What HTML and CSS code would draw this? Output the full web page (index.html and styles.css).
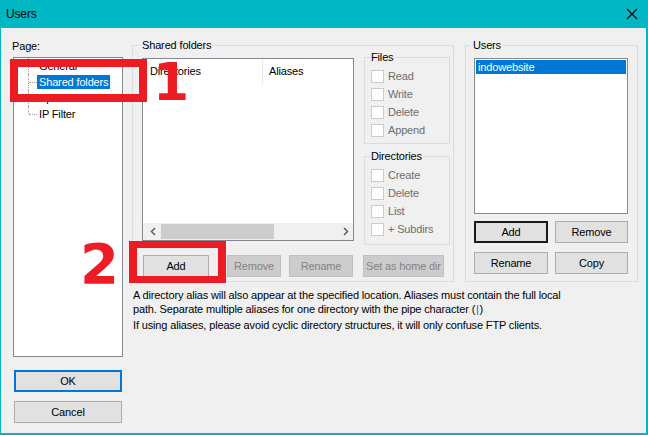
FILE: index.html
```html
<!DOCTYPE html>
<html lang="en">
<head>
    <meta charset="UTF-8">
    <meta name="viewport" content="width=device-width, initial-scale=1.0">
    <title>Users</title>
    <link rel="stylesheet" href="styles.css">
</head>
<body>
    <div class="window">
        <div class="titlebar">
            <span class="title">Users</span>
            <svg class="close" width="12" height="12" viewBox="0 0 12 12">
                <path d="M1 1L11 11M11 1L1 11" stroke="#000" stroke-width="1.1" fill="none"/>
            </svg>
        </div>

        <div class="body">
            <div class="pages">
                <div class="label">Page:</div>
                <div class="tree">
                    <div class="tree-item"><span class="branch"></span><span class="node">General</span></div>
                    <div class="tree-item"><span class="branch"></span><span class="node selected">Shared folders</span></div>
                    <div class="tree-item"><span class="branch"></span><span class="node">Speed Limits</span></div>
                    <div class="tree-item last"><span class="branch"></span><span class="node">IP Filter</span></div>
                </div>
                <div class="dialog-buttons">
                    <button class="btn btn-ok">OK</button>
                    <button class="btn">Cancel</button>
                </div>
            </div>

            <div class="main">
                <div class="groups">
                    <div class="group shared">
                        <div class="group-title">Shared folders</div>
                        <div class="shared-top">
                            <div class="dir-list">
                                <div class="list-header">
                                    <div class="col col-dir">Directories</div>
                                    <div class="col col-alias">Aliases</div>
                                </div>
                                <div class="list-body"></div>
                                <div class="hscroll">
                                    <svg class="arrow" width="6" height="9" viewBox="0 0 6 9"><path d="M5 1L1.5 4.5L5 8" stroke="#606060" stroke-width="1.5" fill="none"/></svg>
                                    <div class="track"><div class="thumb"></div></div>
                                    <svg class="arrow" width="6" height="9" viewBox="0 0 6 9"><path d="M1 1L4.5 4.5L1 8" stroke="#606060" stroke-width="1.5" fill="none"/></svg>
                                </div>
                            </div>
                            <div class="perms">
                                <div class="group sub files">
                                    <div class="group-title">Files</div>
                                    <label class="check"><span class="box"></span>Read</label>
                                    <label class="check"><span class="box"></span>Write</label>
                                    <label class="check"><span class="box"></span>Delete</label>
                                    <label class="check"><span class="box"></span>Append</label>
                                </div>
                                <div class="group sub dirs">
                                    <div class="group-title">Directories</div>
                                    <label class="check"><span class="box"></span>Create</label>
                                    <label class="check"><span class="box"></span>Delete</label>
                                    <label class="check"><span class="box"></span>List</label>
                                    <label class="check"><span class="box"></span>+ Subdirs</label>
                                </div>
                            </div>
                        </div>
                        <div class="shared-buttons">
                            <button class="btn b-add">Add</button>
                            <button class="btn b-remove" disabled>Remove</button>
                            <button class="btn b-rename" disabled>Rename</button>
                            <button class="btn b-home" disabled>Set as home dir</button>
                        </div>
                    </div>

                    <div class="group users">
                        <div class="group-title">Users</div>
                        <div class="user-list">
                            <div class="user selected">indowebsite</div>
                        </div>
                        <div class="user-buttons">
                            <button class="btn btn-default">Add</button>
                            <button class="btn">Remove</button>
                            <button class="btn">Rename</button>
                            <button class="btn">Copy</button>
                        </div>
                    </div>
                </div>

                <p class="note">A directory alias will also appear at the specified location. Aliases must contain the full local<br>path. Separate multiple aliases for one directory with the pipe character (&#8202;<span class="pipe">|</span>&#8202;)</p>
                <p class="note second">If using aliases, please avoid cyclic directory structures, it will only confuse FTP clients.</p>
            </div>
        </div>

        <!-- annotations drawn over the dialog -->
        <div class="mark box-1"></div>
        <div class="mark digit digit-1">1</div>
        <div class="mark box-2"></div>
        <div class="mark digit digit-2">2</div>
    </div>
</body>
</html>
```

FILE: styles.css
```css
* {
    box-sizing: border-box;
}

body {
    margin: 0;
    padding: 0;
    font-family: "Liberation Sans", Arial, sans-serif;
    font-size: 11px;
    letter-spacing: -0.15px;
    color: #000;
    background-color: #f0f0f0;
}

.window {
    position: relative;
    width: 648px;
    height: 435px;
    background-color: #f0f0f0;
    border-left: 1px solid #00b7c3;
    border-right: 2px solid #00b7c3;
    border-bottom: 2px solid #00b7c3;
    overflow: hidden;
}

.titlebar {
    height: 28px;
    margin-left: -1px;
    margin-right: -2px;
    background-color: #00b7c3;
    display: flex;
    align-items: center;
    justify-content: space-between;
    padding: 0 10px 0 6px;
}

.title {
    font-size: 12px;
}

.close {
    display: block;
}

.body {
    display: flex;
    padding: 11px 0 0 11px;
}

/* left column */
.pages {
    width: 111px;
    display: flex;
    flex-direction: column;
}

.label {
    height: 14px;
    line-height: 14px;
    margin-bottom: 4px;
}

.tree {
    margin-left: 1px;
    width: 110px;
    height: 300px;
    background-color: #fff;
    border: 1px solid #828790;
}

.tree-item {
    height: 16px;
    display: flex;
    align-items: center;
    padding-left: 14px;
}

.branch {
    width: 9px;
    height: 16px;
    border-left: 1px dotted #a0a0a0;
    position: relative;
}

.branch::after {
    content: "";
    position: absolute;
    left: 0;
    top: 8px;
    width: 8px;
    border-top: 1px dotted #a0a0a0;
}

.tree-item.last .branch {
    height: 8px;
    align-self: flex-start;
}

.node {
    line-height: 14px;
    padding: 0 2px;
}

.node.selected {
    background-color: #0078d7;
    color: #fff;
}

.dialog-buttons {
    margin-top: 13px;
    margin-left: 2px;
    display: flex;
    flex-direction: column;
    gap: 9px;
}

.btn {
    font-family: inherit;
    font-size: 11px;
    letter-spacing: -0.15px;
    white-space: nowrap;
    color: #000;
    background-color: #e1e1e1;
    border: 1px solid #adadad;
    border-radius: 0;
    padding: 0;
    height: 22px;
    margin: 0;
}

.btn:disabled {
    background-color: #cccccc;
    border-color: #bfbfbf;
    color: #838383;
}

.dialog-buttons .btn {
    width: 108px;
}

.btn-ok {
    border: 2px solid #0078d7;
}

.btn-default {
    border: 2px solid #1a1a1a;
}

/* main column */
.main {
    margin-left: 9px;
    margin-top: 6px;
}

.groups {
    display: flex;
    gap: 11px;
}

.group {
    border: 1px solid #dcdcdc;
}

.group-title {
    width: fit-content;
    height: 14px;
    line-height: 14px;
    margin-top: -8px;
    padding: 0 2px;
    background-color: #f0f0f0;
}

.shared {
    width: 322px;
    height: 237px;
    padding: 0 0 0 9px;
}

.shared > .group-title {
    margin-left: -2px;
}

.shared-top {
    display: flex;
    margin-top: 6px;
}

.dir-list {
    width: 212px;
    height: 183px;
    background-color: #fff;
    border: 1px solid #828790;
    display: flex;
    flex-direction: column;
}

.list-header {
    display: flex;
    height: 25px;
    padding-top: 1px;
}

.col {
    line-height: 23px;
}

.col-dir {
    width: 120px;
    padding-left: 7px;
    border-right: 1px solid #e5e5e5;
}

.col-alias {
    padding-left: 6px;
}

.list-body {
    flex: 1;
}

.hscroll {
    height: 17px;
    background-color: #f0f0f0;
    display: flex;
    align-items: center;
}

.hscroll .arrow {
    margin: 0 5px 0 7px;
}

.hscroll .arrow:last-child {
    margin: 0 4px 0 0;
}

.track {
    flex: 1;
    height: 15px;
}

.thumb {
    width: 113px;
    height: 15px;
    background-color: #cdcdcd;
}

.perms {
    margin-left: 10px;
    margin-top: -1px;
}

.sub {
    width: 86px;
    padding: 0 0 4px 6px;
}

.sub .group-title {
    margin-left: -1px;
    padding: 0 1px;
    margin-bottom: 3px;
}

.dirs {
    margin-top: 12px;
    padding-bottom: 6px;
}

.check {
    display: flex;
    align-items: center;
    height: 18px;
    color: #6d6d6d;
}

.box {
    width: 13px;
    height: 13px;
    border: 1px solid #cccccc;
    background-color: #fff;
    margin-right: 4px;
}

.shared-buttons {
    display: flex;
    margin-top: 10px;
    padding-left: 1px;
}

.b-add {
    width: 66px;
}

.b-remove {
    width: 54px;
    margin-left: 18px;
}

.b-rename {
    width: 64px;
    margin-left: 8px;
}

.b-home {
    width: 81px;
    margin-left: 10px;
}

.users {
    width: 173px;
    height: 237px;
    padding: 0 0 0 8px;
}

.users > .group-title {
    margin-left: -3px;
}

.user-list {
    margin-top: 6px;
    width: 154px;
    height: 156px;
    background-color: #fff;
    border: 1px solid #828790;
    padding: 1px;
}

.user {
    line-height: 14px;
    padding-left: 2px;
}

.user.selected {
    background-color: #0078d7;
    color: #fff;
}

.user-buttons {
    display: grid;
    grid-template-columns: 74px 73px;
    column-gap: 7px;
    row-gap: 9px;
    margin-top: 7px;
}

.note {
    margin: 6px 0 0 1px;
    line-height: 14px;
}

.note.second {
    margin-top: 2px;
}

.pipe {
    color: #3b5ea8;
}

/* red annotations */
.mark {
    position: absolute;
    color: #ed1c24;
}

.box-1 {
    left: 9px;
    top: 59px;
    width: 137px;
    height: 43px;
    border: 8px solid #ed1c24;
}

.box-2 {
    left: 128px;
    top: 241px;
    width: 97px;
    height: 42px;
    border-style: solid;
    border-color: #ed1c24;
    border-width: 7px 8px;
}

.digit {
    font-family: "DejaVu Sans", sans-serif;
    font-weight: bold;
    letter-spacing: 0;
}

.digit-1 {
    left: 152px;
    top: 56px;
    font-size: 52px;
    line-height: 52px;
}

.digit-2 {
    left: 79px;
    top: 236px;
    font-size: 56px;
    line-height: 56px;
}
```
